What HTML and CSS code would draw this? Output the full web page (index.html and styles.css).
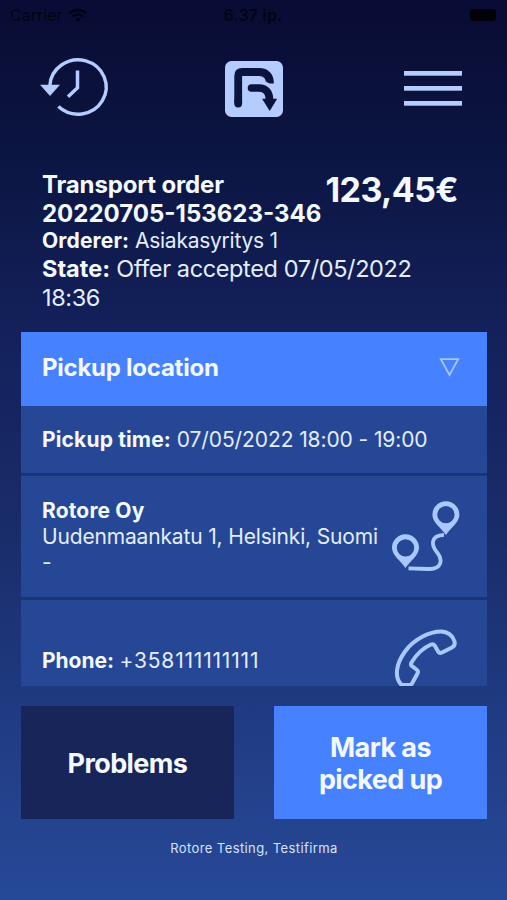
FILE: index.html
```html
<!DOCTYPE html>
<html lang="en">
<head>
  <meta charset="UTF-8">
  <meta name="viewport" content="width=device-width,initial-scale=1.0">
  <title>Transport order</title>
  <link rel="stylesheet" href="styles.css">
</head>
<body>
  <div class="app">
    <!-- status bar -->
    <div class="status-bar">
      <div class="carrier">
        <span>Carrier</span>
        <svg width="20" height="15" viewBox="0 0 20 15">
          <path d="M1.500 5.600a12 12 0 0 1 17 0M4.600 8.800a7.600 7.600 0 0 1 10.800 0" fill="none" stroke="#020413" stroke-width="2.600"/>
          <path d="M10 14.200l-3-3.100a4.300 4.300 0 0 1 6 0z" fill="#020413"/>
        </svg>
      </div>
      <div class="clock">6.37 ip.</div>
      <div class="battery"><span></span></div>
    </div>

    <!-- top navigation -->
    <div class="top-nav">
      <svg class="history-icon" width="68" height="60" viewBox="0 0 68 60" fill="none" stroke="#b4ccff">
        <path d="M9.800 27A28.200 27.200 0 1 1 18.400 47.600" stroke-width="3.400"/>
        <path d="M37.500 11.500v17.300l-9.500 9" stroke-width="3.500"/>
        <path d="M0 25.800h20L10 37z" fill="#b4ccff" stroke="none"/>
      </svg>
      <svg class="logo" width="58" height="56" viewBox="0 0 58 56" fill="none">
        <rect width="58" height="56" rx="6.500" fill="#b4ccff"/>
        <g stroke="#0b143d">
          <path d="M13.200 42V15q0-4 4-4H34c7.500 0 11 4.500 11 11.500" stroke-width="7.800" stroke-linejoin="round"/>
          <path d="M13.200 40v2.500" stroke-width="7.800" stroke-linecap="round"/>
          <path d="M26.500 27H34c7.500 0 10.500 5 10.500 12" stroke-width="7.600" stroke-linecap="round"/>
        </g>
        <path d="M40.800 20.500q4 1.500 6 4.800l2.500-2.800-1 5.200-2-1.500q-2.500-2.200-5.500-3z" fill="#b4ccff"/>
        <path d="M37 37.800h15.200L44.700 50z" fill="#0b143d"/>
      </svg>
      <svg class="menu-icon" width="58" height="36" viewBox="0 0 58 36" fill="#b4ccff">
        <rect y="0" width="58" height="4.700"/>
        <rect y="15" width="58" height="4.700"/>
        <rect y="30" width="58" height="4.700"/>
      </svg>
    </div>

    <!-- order summary -->
    <div class="summary">
      <div class="summary-head">
        <h1>Transport order<br><span class="order-no">20220705-153623-346</span></h1>
        <div class="price">123,45€</div>
      </div>
      <p class="orderer"><b>Orderer:</b> Asiakasyritys 1</p>
      <p class="state"><b>State:</b> Offer accepted 07/05/2022 18:36</p>
    </div>

    <div class="details">
      <div class="details-title">
        <h2>Pickup location</h2>
        <svg width="21" height="19" viewBox="0 0 21 19">
          <path d="M1.800 1.200h17.400L10.500 17z" fill="none" stroke="#a9c8ff" stroke-width="1.800"/>
        </svg>
      </div>
      <div class="row row-time">
        <p class="pickup-time"><b>Pickup time:</b> 07/05/2022 18:00 - 19:00</p>
      </div>
      <div class="row row-address">
        <div>
          <p class="company"><b>Rotore Oy</b></p>
          <p class="address">Uudenmaankatu 1, Helsinki, Suomi</p>
          <p class="address">-</p>
        </div>
        <svg class="route-icon" width="68" height="70" viewBox="0 0 68 70">
          <path d="M16.500 67.300l20 .7c14 .5 14-10 9-16-6-7-8-17.500 6.500-18.200" fill="none" stroke="#a9c8ff" stroke-width="3.800"/>
          <path fill="#a9c8ff" fill-rule="evenodd" d="M13.500 67C9 60 0 54.500 0 46.700a13.500 13.500 0 0 1 27 0C27 54.500 18 60 13.500 67zM13.500 38.200a8.700 8.700 0 1 0 0 17.400 8.700 8.700 0 0 0 0-17.400z"/>
          <path fill="#a9c8ff" fill-rule="evenodd" d="M53.900 34C49.400 27 40.400 21.500 40.400 13.700a13.500 13.500 0 0 1 27 0C67.400 21.500 58.400 27 53.900 34zM53.900 4.900a8.700 8.700 0 1 0 0 17.400 8.700 8.700 0 0 0 0-17.400z"/>
        </svg>
      </div>
      <div class="row row-phone">
        <p class="phone"><b>Phone:</b> <span class="phone-no">+358111111111</span></p>
        <svg class="phone-icon" width="64" height="64" viewBox="0 0 64 64">
          <path d="M8.500 56C1 48 3 35 12 22.500 21 10 37 2.500 48 2.500c7 0 12 4.500 13.500 10 .7 3 0 4.700-2.500 6l-10 5c-1.800.8-3 .3-4-1.200l-3.500-6c-.9-1.300-1.800-1.500-3.500-.8-8 3.500-15 10.500-19.500 18-.9 1.600-.8 2.700.5 3.700l4.500 3.300c1.700 1.200 1.900 2.300 1 4l-5.500 10c-.7 1.200-1.500 1.500-3 1.500z" fill="none" stroke="#a9c8ff" stroke-width="4" stroke-linejoin="round"/>
        </svg>
      </div>
    </div>

    <div class="actions">
      <button class="btn btn-dark">Problems</button>
      <button class="btn btn-primary">Mark as<br>picked up</button>
    </div>

    <div class="footer">Rotore Testing, Testifirma</div>
  </div>
</body>
</html>
```
FILE: styles.css
```css
* {
  margin: 0;
  padding: 0;
  box-sizing: border-box;
}

body {
  font-family: Inter, "Liberation Sans", sans-serif;
  color: #e3edff;
  background-color: #0a1037;
}

b {
  color: #f4f9ff;
  font-weight: 700;
  letter-spacing: 0.15px;
}

.app {
  width: 507px;
  height: 900px;
  padding: 0 20px 0 21px;
  display: flex;
  flex-direction: column;
  overflow: hidden;
  background: linear-gradient(#090c34 0%, #0b143f 15%, #13205a 36%, #1a2d6b 60%, #1f3a80 78%, #25448f 92%, #264898 100%);
}

/* status bar */
.status-bar {
  height: 30px;
  margin: 0 -9px 0 -11px;
  display: grid;
  grid-template-columns: 1fr auto 1fr;
  align-items: center;
  color: #020413;
  font-size: 16px;
}
.carrier {
  display: flex;
  align-items: center;
  gap: 6px;
}
.clock {
  font-weight: 600;
  letter-spacing: 0.2px;
}
.battery {
  justify-self: end;
}
.battery span {
  display: block;
  width: 26px;
  height: 12px;
  border-radius: 3px;
  background-color: #010208;
}

/* top navigation */
.top-nav {
  height: 118px;
  padding: 0 25px 0 19px;
  display: flex;
  justify-content: space-between;
  align-items: center;
  flex-shrink: 0;
}
.history-icon {
  overflow: visible;
}
.logo {
  margin-left: -4px;
}

/* order summary */
.summary {
  height: 184px;
  padding: 22px 29px 0 21px;
  flex-shrink: 0;
}
.summary-head {
  display: flex;
  justify-content: space-between;
  white-space: nowrap;
}
.summary h1 {
  color: #f4f9ff;
  font-size: 24px;
  font-weight: 700;
  line-height: 29px;
  letter-spacing: -0.15px;
}
.summary .order-no {
  letter-spacing: 0;
}
.price {
  color: #f4f9ff;
  font-size: 34px;
  font-weight: 700;
  line-height: 40px;
  letter-spacing: -0.6px;
}
.orderer {
  font-size: 21px;
  line-height: 26px;
  letter-spacing: -0.25px;
}
.state {
  font-size: 23.5px;
  line-height: 29px;
  letter-spacing: -0.38px;
}
.state b {
  letter-spacing: 0;
}

/* pickup details */
.details {
  height: 354px;
  overflow: hidden;
  flex-shrink: 0;
}
.details-title {
  height: 74px;
  padding: 0 27px 3px 21px;
  display: flex;
  justify-content: space-between;
  align-items: center;
  background-color: #4681ff;
}
.details-title h2 {
  color: #f4f9ff;
  font-size: 24px;
  font-weight: 700;
  letter-spacing: -0.25px;
}
.row {
  padding: 0 30px 0 21px;
  display: flex;
  justify-content: space-between;
  background-color: #264795;
  border-bottom: 3px solid #1b3475;
  font-size: 21px;
  line-height: 26px;
  white-space: nowrap;
}
.row-time {
  height: 70px;
  align-items: center;
}
.pickup-time {
  letter-spacing: -0.1px;
}
.row-address {
  height: 124px;
  padding-top: 22px;
}
.address {
  letter-spacing: -0.16px;
}
.route-icon {
  margin: 3px -3px 0 0;
}
.row-phone {
  height: 124px;
  padding-top: 29px;
}
.phone {
  margin-top: 19px;
  letter-spacing: -0.2px;
}
.phone b {
  letter-spacing: -0.05px;
}
.phone-no {
  letter-spacing: 0.8px;
}

/* buttons */
.actions {
  margin-top: 20px;
  display: flex;
  gap: 40px;
}
.btn {
  flex: 1;
  height: 113px;
  padding-top: 2px;
  border: none;
  color: #f4f9ff;
  font-family: inherit;
  font-size: 27px;
  font-weight: 700;
  line-height: 32px;
  letter-spacing: -0.6px;
}
.btn-dark {
  background-color: #172559;
}
.btn-primary {
  background-color: #4681ff;
}

.footer {
  margin-top: 20px;
  color: #d5e2ff;
  font-size: 13px;
  line-height: 19px;
  letter-spacing: 0.4px;
  text-align: center;
}
```
